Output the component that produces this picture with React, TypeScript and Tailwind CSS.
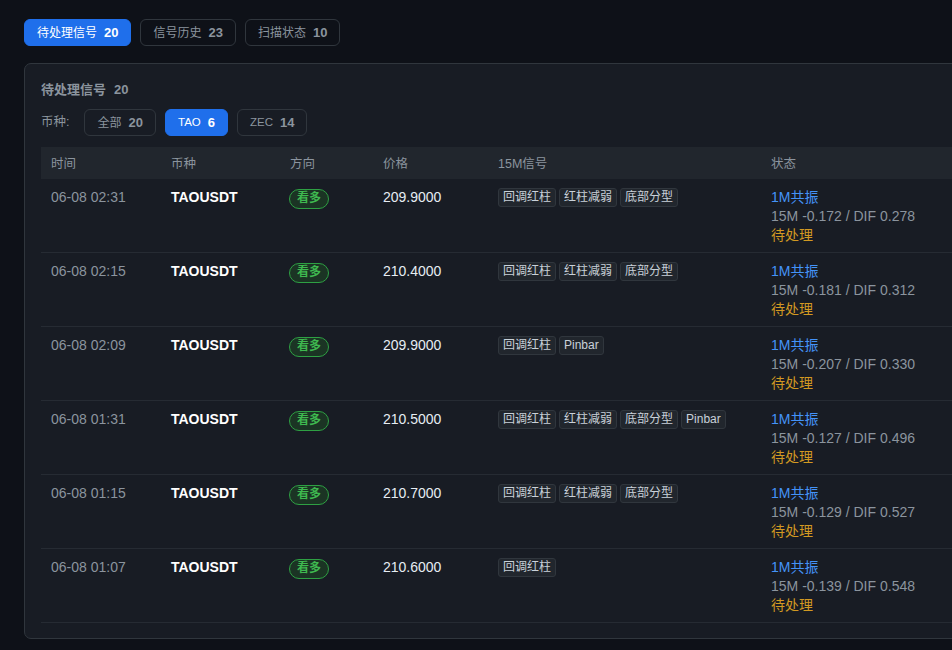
import React from "react";

type Row = {
  time: string;
  price: string;
  tags: string[];
  m15: string;
  dif: string;
};

const rows: Row[] = [
  { time: "06-08 02:31", price: "209.9000", tags: ["回调红柱", "红柱减弱", "底部分型"], m15: "-0.172", dif: "0.278" },
  { time: "06-08 02:15", price: "210.4000", tags: ["回调红柱", "红柱减弱", "底部分型"], m15: "-0.181", dif: "0.312" },
  { time: "06-08 02:09", price: "209.9000", tags: ["回调红柱", "Pinbar"], m15: "-0.207", dif: "0.330" },
  { time: "06-08 01:31", price: "210.5000", tags: ["回调红柱", "红柱减弱", "底部分型", "Pinbar"], m15: "-0.127", dif: "0.496" },
  { time: "06-08 01:15", price: "210.7000", tags: ["回调红柱", "红柱减弱", "底部分型"], m15: "-0.129", dif: "0.527" },
  { time: "06-08 01:07", price: "210.6000", tags: ["回调红柱"], m15: "-0.139", dif: "0.548" },
];

const font = {
  fontFamily: '"Liberation Sans", "Noto Sans CJK SC", sans-serif',
};

function Pill({
  label,
  count,
  active,
  latin,
}: {
  label: string;
  count: number;
  active?: boolean;
  latin?: boolean;
}) {
  return (
    <button
      className={
        active
          ? "h-[27px] px-[12px] rounded-[6px] bg-[#1f6feb] border border-[#1f6feb] text-white flex items-center gap-[7px]"
          : "h-[27px] px-[12px] rounded-[6px] border border-[#30363d] text-[#8b949e] flex items-center gap-[7px]"
      }
    >
      <span className={latin ? "text-[11.5px]" : "text-[12px]"}>{label}</span>
      <span className="text-[13px] font-bold">{count}</span>
    </button>
  );
}

function Tag({ text }: { text: string }) {
  return (
    <span className="h-[19px] px-[4px] rounded-[3px] bg-[#21262d] border border-[#30363d] text-[#c9d1d9] text-[12px] leading-[17px] whitespace-nowrap">
      {text}
    </span>
  );
}

export default function App() {
  return (
    <div className="w-[952px] h-[650px] overflow-hidden bg-[#0e1118]" style={font}>
      <div className="pl-[24px] pt-[19px]">
        <div className="flex gap-[9px]">
          <Pill label="待处理信号" count={20} active />
          <Pill label="信号历史" count={23} />
          <Pill label="扫描状态" count={10} />
        </div>

        <div className="mt-[17px] w-[1000px] rounded-[7px] border border-[#30363d] bg-[#181c24] pl-[16px] pt-[15px] pb-[15px]">
          <div className="h-[21px] flex items-center gap-[8px] text-[13px] font-bold text-[#8b949e]">
            <span>待处理信号</span>
            <span>20</span>
          </div>

          <div className="mt-[9px] flex items-center gap-[9px]">
            <span className="text-[12.5px] text-[#8b949e] mr-[6px]">币种:</span>
            <Pill label="全部" count={20} />
            <Pill label="TAO" count={6} active latin />
            <Pill label="ZEC" count={14} latin />
          </div>

          <div className="mt-[11px]">
            <div className="h-[32px] bg-[#21262d] flex items-center pt-[2px] text-[12.5px] text-[#8b949e]">
              <div className="w-[120px] pl-[10px]">时间</div>
              <div className="w-[119px] pl-[10px]">币种</div>
              <div className="w-[93px] pl-[10px]">方向</div>
              <div className="w-[115px] pl-[10px]">价格</div>
              <div className="w-[273px] pl-[10px]">15M信号</div>
              <div className="flex-1 pl-[10px]">状态</div>
            </div>

            {rows.map((r, i) => (
              <div key={i} className="h-[74px] flex items-start border-b border-[#262b33] pt-[9px] text-[14px] leading-[19px]">
                <div className="w-[120px] pl-[10px] text-[#8b949e]">{r.time}</div>
                <div className="w-[119px] pl-[10px] text-white font-bold">TAOUSDT</div>
                <div className="w-[93px] pl-[9px]">
                  <span className="inline-flex items-center h-[20px] px-[7px] rounded-full border border-[#2ea043] bg-[#1b3424] text-[#3fb950] text-[12px] font-bold">
                    看多
                  </span>
                </div>
                <div className="w-[115px] pl-[10px] text-[#e6edf3]">{r.price}</div>
                <div className="w-[273px] pl-[10px] flex gap-[3px]">
                  {r.tags.map((t) => (
                    <Tag key={t} text={t} />
                  ))}
                </div>
                <div className="flex-1 pl-[10px] flex flex-col">
                  <span className="text-[#4493f8]">1M共振</span>
                  <span className="text-[#8b949e]">
                    15M {r.m15} / DIF {r.dif}
                  </span>
                  <span className="text-[#d29922]">待处理</span>
                </div>
              </div>
            ))}
          </div>
        </div>
      </div>
    </div>
  );
}
